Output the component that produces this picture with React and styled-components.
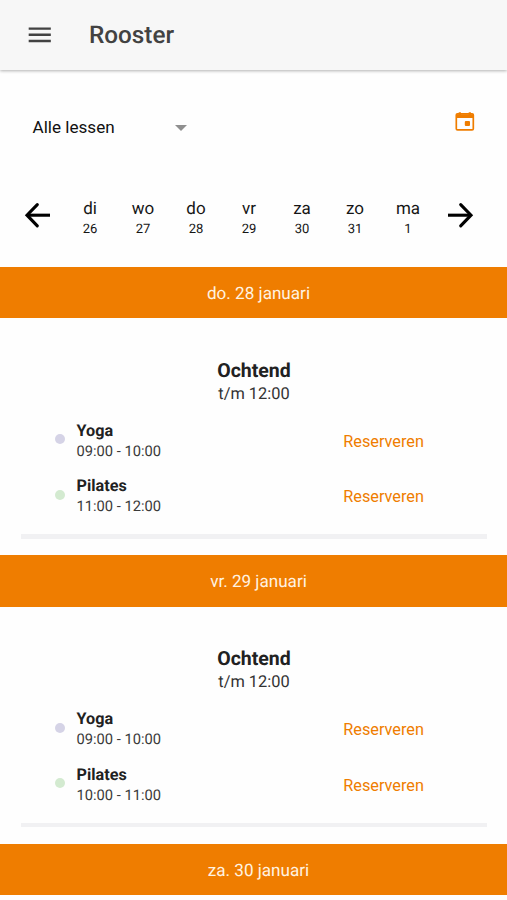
import React from 'react';
import styled, { createGlobalStyle } from 'styled-components';

const GlobalStyle = createGlobalStyle`
  * { box-sizing: border-box; }
  html, body { margin: 0; padding: 0; background: #ffffff; overflow: hidden; }
  body { font-family: Roboto, 'Open Sans', sans-serif; color: #212121; text-rendering: geometricPrecision; }
  button { font: inherit; color: inherit; background: none; border: none; padding: 0; cursor: pointer; }
  svg { display: block; }
`;

const Page = styled.div`
  width: 507px;
  height: 900px;
  overflow: hidden;
  background: #fefefe;
`;

///////// header //////////////

const Header = styled.header`
  display: flex;
  align-items: center;
  height: 70px;
  padding-left: 25px;
  background: #f7f7f7;
  box-shadow: 0 1px 3px rgba(0, 0, 0, 0.3);
`;

const Title = styled.h1`
  margin: 0 0 0 34.5px;
  font-size: 24.3px;
  font-weight: 500;
  line-height: 30px;
  color: #424242;
`;

const MenuIcon = () => (
  <svg width="29.5" height="29.5" viewBox="0 0 24 24" fill="#424242">
    <path d="M3 18h18v-2H3v2zm0-5h18v-2H3v2zm0-7v2h18V6H3z" />
  </svg>
);

///////// filter //////////////

const Filter = styled.div`
  display: flex;
  justify-content: space-between;
  height: 116px;
  padding: 41px 32px 0 32.5px;
`;

const Select = styled.button`
  display: flex;
  align-items: center;
  justify-content: space-between;
  width: 154px;
  height: 32px;
  font-size: 17.1px;
  color: #111111;
`;

const Caret = styled.span`
  margin-top: 2px;
  border: 6px solid transparent;
  border-top-color: #8f8f8f;
  border-bottom: none;
`;

const CalendarIcon = () => (
  <svg width="20" height="20" viewBox="0 0 20 20">
    <rect x="1.3" y="2.9" width="17" height="16" rx="1.2" fill="none" stroke="#ef7d00" strokeWidth="1.7" />
    <path d="M1 3.2h17.6v3.7H1zM3.7 1.2h2.2v3H3.7zM13.7 1.2h2.2v3h-2.2z" fill="#ef7d00" />
    <rect x="9.8" y="10" width="5.2" height="5" rx="1" fill="#ef7d00" />
  </svg>
);

const CalendarButton = styled.button`
  width: 20px;
  height: 20px;
`;

///////// week //////////////

const Week = styled.div`
  display: flex;
  align-items: center;
  justify-content: space-between;
  height: 58px;
  padding: 0 33px 0 24px;
`;

const Days = styled.div`
  display: grid;
  grid-template-columns: repeat(7, 53px);
  padding-top: 6px;
`;

const Day = styled.div`
  text-align: center;
  color: #151515;
`;

const DayName = styled.div`
  font-size: 17px;
  line-height: 22px;
`;

const DayNumber = styled.div`
  font-size: 13px;
  line-height: 19px;
`;

const Arrow = ({ flip }) => (
  <svg width="26" height="26" viewBox="0 0 26 26" fill="none" stroke="#000" strokeWidth="3.1">
    <g transform={flip ? 'matrix(-1 0 0 1 26 0)' : undefined}>
      <path d="M13.3 2.6L3 13.2l10.3 10.6" strokeLinecap="round" />
      <path d="M3 13.2h23" />
    </g>
  </svg>
);

///////// lessons //////////////

const Schedule = styled.main`
  padding-top: 22.5px;
`;

const DateBar = styled.div`
  height: 51.5px;
  line-height: 54px;
  text-align: center;
  font-size: 17.1px;
  color: #fff3e2;
  background: #ef7d00;
  padding-left: 10px;
`;

const DayBody = styled.section`
  height: 237px;
  padding: 40.5px 20px 0 21px;
`;

const PartName = styled.h2`
  margin: 0;
  text-align: center;
  font-size: 19.5px;
  font-weight: 700;
  line-height: 24px;
`;

const PartTime = styled.div`
  text-align: center;
  font-size: 16.4px;
  line-height: 24px;
  color: #333333;
`;

const Lessons = styled.div`
  display: grid;
  row-gap: 13.5px;
  margin: 13px 0 17px;
`;

const Lesson = styled.div`
  display: flex;
  align-items: center;
  height: 42px;
  padding: 0 63px 0 33.5px;
`;

const Dot = styled.span`
  width: 10px;
  height: 10px;
  margin: 0 12px 3px 0;
  border-radius: 50%;
  background: ${(props) => props.$color};
`;

const Info = styled.div`
  flex: 1;
  line-height: 21px;
`;

const LessonName = styled.div`
  font-size: 16.2px;
  font-weight: 700;
`;

const LessonTime = styled.div`
  font-size: 14.7px;
  color: #3a3a3a;
`;

const Reserve = styled.button`
  padding-top: 1px;
  font-size: 16.3px;
  color: #ef7d00;
`;

const Divider = styled.div`
  height: 4.5px;
  background: #f1f1f3;
`;

const days = [
  ['di', 26], ['wo', 27], ['do', 28], ['vr', 29], ['za', 30], ['zo', 31], ['ma', 1],
];

const schedule = [
  { date: 'do. 28 januari', lessons: [
    { name: 'Yoga', time: '09:00 - 10:00', color: '#d5d3e6' },
    { name: 'Pilates', time: '11:00 - 12:00', color: '#d3ead0' },
  ] },
  { date: 'vr. 29 januari', lessons: [
    { name: 'Yoga', time: '09:00 - 10:00', color: '#d5d3e6' },
    { name: 'Pilates', time: '10:00 - 11:00', color: '#d3ead0' },
  ] },
  { date: 'za. 30 januari', lessons: [] },
];

const DaySchedule = ({ date, lessons }) => (
  <>
    <DateBar>{date}</DateBar>
    { lessons.length > 0 && (
      <DayBody>
        <PartName>Ochtend</PartName>
        <PartTime>t/m 12:00</PartTime>
        <Lessons>
          { lessons.map( (l) => (
            <Lesson key={l.name}>
              <Dot $color={l.color} />
              <Info>
                <LessonName>{l.name}</LessonName>
                <LessonTime>{l.time}</LessonTime>
              </Info>
              <Reserve>Reserveren</Reserve>
            </Lesson>
          ) ) }
        </Lessons>
        <Divider />
      </DayBody>
    ) }
  </>
);

const App = () => (
  <Page>
    <GlobalStyle />
    <Header>
      <button aria-label="Menu"><MenuIcon /></button>
      <Title>Rooster</Title>
    </Header>
    <Filter>
      <Select>Alle lessen <Caret /></Select>
      <CalendarButton aria-label="Kalender"><CalendarIcon /></CalendarButton>
    </Filter>
    <Week>
      <button aria-label="Vorige"><Arrow /></button>
      <Days>
        { days.map( ([name, number]) => (
          <Day key={name}>
            <DayName>{name}</DayName>
            <DayNumber>{number}</DayNumber>
          </Day>
        ) ) }
      </Days>
      <button aria-label="Volgende"><Arrow flip /></button>
    </Week>
    <Schedule>
      { schedule.map( (d) => <DaySchedule key={d.date} {...d} /> ) }
    </Schedule>
  </Page>
);

export default App;
